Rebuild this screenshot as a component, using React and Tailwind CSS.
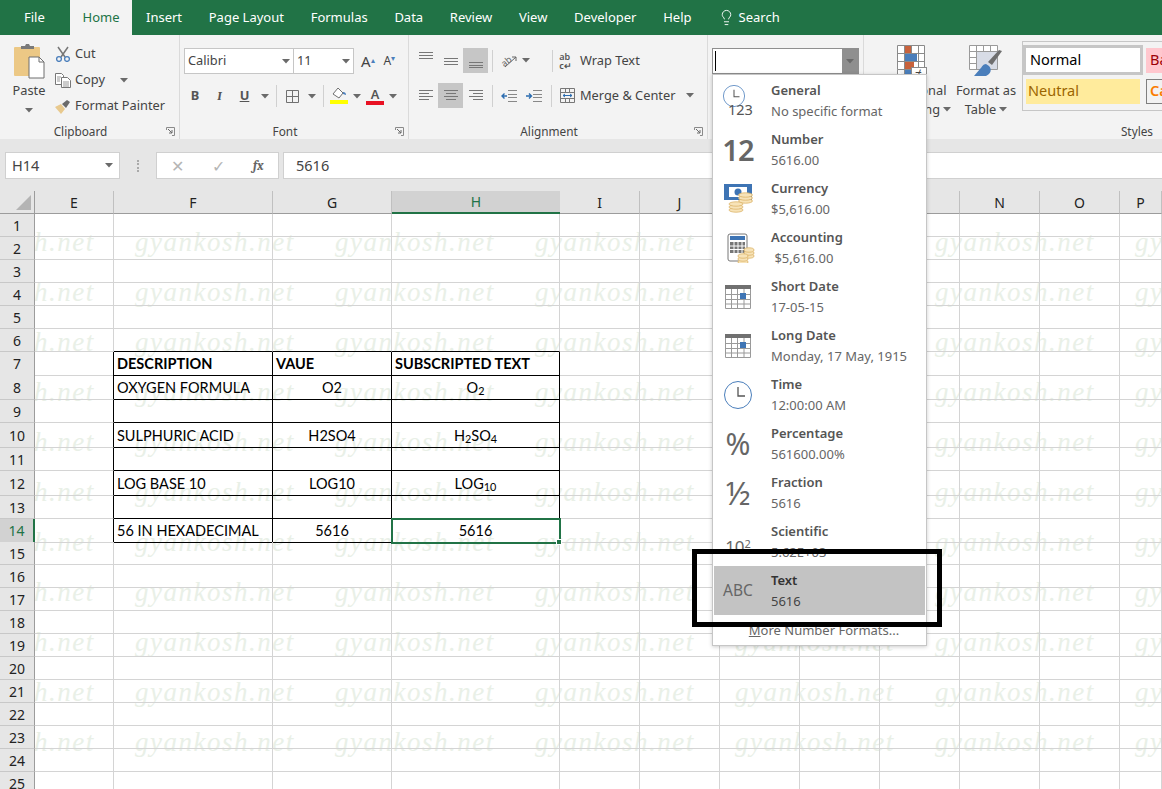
import React from "react";
import clsx from "clsx";
import { Lightbulb } from "lucide-react";

const tabs = ["Insert", "Page Layout", "Formulas", "Data", "Review", "View", "Developer", "Help"];

const columns = ["E", "F", "G", "H", "I", "J", "K", "L", "M", "N", "O", "P"];
const gridCols = "grid grid-cols-[35px_79px_159px_119px_168px_80px_80px_80px_80px_80px_80px_80px_42px]";

const Caret = ({ className }) => (
  <svg width="8" height="5" viewBox="0 0 8 5" className={clsx("shrink-0", className)}>
    <path d="M0 0h8L4 4.5z" fill="#6a6a6a" />
  </svg>
);

const Launcher = () => (
  <svg width="9" height="9" viewBox="0 0 9 9">
    <path d="M.5 3V.5h8v8H6" fill="none" stroke="#8a8a8a" />
    <path d="M2 2l4 4M3 6h3V3" fill="none" stroke="#6a6a6a" />
  </svg>
);

const Sep = ({ className }) => <div className={clsx("h-[22px] w-px bg-[#d0d0d0]", className)} />;

const Group = ({ label, launcher, className, labelClass, children }) => (
  <div className={clsx("flex h-full shrink-0 flex-col", className)}>
    <div className="flex-1">{children}</div>
    <div className={clsx("relative flex h-[18px] items-center pt-[3px] text-[11.800px] text-[#444]", labelClass ?? "justify-center pr-[18px]")}>
      {label}
      {launcher && (
        <div className="absolute right-[4px] top-[6px]">
          <Launcher />
        </div>
      )}
    </div>
  </div>
);

// lines for the alignment buttons, y values keep the vertical align variants apart
const AlignIcon = ({ rows, className }) => (
  <svg width="16" height="14" viewBox="0 0 16 14" className={className}>
    {rows.map(([x1, x2, y], i) => (
      <path key={i} d={`M${x1} ${y + 0.5}H${x2}`} stroke="#777" />
    ))}
  </svg>
);

const PasteIcon = () => (
  <svg width="32" height="36" viewBox="0 0 32 36">
    <rect x="1" y="4" width="26" height="29" rx="1" fill="#ecc885" />
    <path d="M8 5V3h4l1-2h3l1 2h4v3H8z" fill="#7a7a7a" />
    <path d="M16 14h10l5 5v16H16z" fill="#fff" stroke="#6e6e6e" />
    <path d="M26 14v5h5" fill="none" stroke="#6e6e6e" />
  </svg>
);

const CutIcon = () => (
  <svg width="16" height="16" viewBox="0 0 16 16">
    <path d="M3 1l7 10M13 1L6 11" stroke="#777" strokeWidth="1.5" fill="none" />
    <circle cx="4" cy="13" r="2.4" fill="none" stroke="#4a7ebb" strokeWidth="1.3" />
    <circle cx="12" cy="13" r="2.4" fill="none" stroke="#4a7ebb" strokeWidth="1.3" />
  </svg>
);

const CopyIcon = () => (
  <svg width="16" height="15" viewBox="0 0 16 15">
    <path d="M.5.5h6l2 2v9h-8z" fill="#fff" stroke="#777" />
    <path d="M6.5 4.5h6l3 3v7h-9z" fill="#fff" stroke="#777" />
    <path d="M2 4h4M2 6h3M2 8h3M8 9h6M8 11h6M8 13h6" stroke="#999" />
  </svg>
);

const PainterIcon = () => (
  <svg width="16" height="15" viewBox="0 0 16 15">
    <path d="M0 8l6-3 4 5-4 5z" fill="#e8c98e" />
    <path d="M7 5l5-4 3 2-4 6z" fill="#6a6a6a" />
  </svg>
);

const BordersIcon = () => (
  <svg width="13" height="13" viewBox="0 0 13 13">
    <path d="M.5.5h12v12H.5zM6.5.5v12M.5 6.5h12" fill="none" stroke="#707070" />
  </svg>
);

const FillIcon = () => (
  <svg width="18" height="18" viewBox="0 0 18 18">
    <path d="M8 1l5 5-4 5-6-4z" fill="#fff" stroke="#707070" />
    <path d="M13 5c2 0 3 1 3 3l-3-1z" fill="#4a7ebb" />
    <rect x="0" y="13" width="18" height="4" fill="#ffff00" />
  </svg>
);

const OrientIcon = () => (
  <svg width="16" height="15" viewBox="0 0 16 15">
    <text x="0" y="11" fontSize="9" fill="#666" transform="rotate(-40 6 8)">ab</text>
    <path d="M4 14L15 4M15 4h-4M15 4v4" stroke="#666" fill="none" />
  </svg>
);

const IndentIcon = ({ flip }) => (
  <svg width="16" height="12" viewBox="0 0 16 12">
    <path d="M7 .5h9M7 4.5h9M7 7.5h9M7 11.5h9" stroke="#888" />
    {flip ? <path d="M0 6h5M3 3.5L5.5 6 3 8.5" stroke="#2b6cb0" strokeWidth="1.4" fill="none" /> : <path d="M6 6H1M3.5 3.5L1 6l2.5 2.5" stroke="#2b6cb0" strokeWidth="1.4" fill="none" />}
  </svg>
);

const MergeIcon = () => (
  <svg width="15" height="15" viewBox="0 0 15 15">
    <path d="M.5.5h14v14H.5zM.5 4.5h14M.5 10.5h14M5.5.5v4M9.5.5v4M5.5 10.5v4M9.5 10.5v4" fill="none" stroke="#777" />
    <path d="M3 7.5h9M3 7.5l2-1.5M3 7.5L5 9M12 7.5L10 6M12 7.5L10 9" stroke="#2b6cb0" fill="none" />
  </svg>
);

const CondIcon = () => (
  <svg width="30" height="38" viewBox="0 0 30 38">
    <path d="M.5.5h27v24H.5zM.5 8.5h27M.5 16.5h27M7.5.5v32M14.5.5v24M21.5.5v24M.5 24.5v8h7" fill="#fff" stroke="#8a8a8a" />
    <rect x="8" y="1" width="6" height="7" fill="#c8623c" />
    <rect x="8" y="9" width="12" height="7" fill="#4a7ebb" />
    <rect x="8" y="17" width="9" height="7" fill="#c8623c" />
    <rect x="8" y="25" width="6" height="7" fill="#4a7ebb" />
    <rect x="14.500" y="22.500" width="15" height="14" fill="#fff" stroke="#8a8a8a" />
    <text x="18" y="34" fontSize="12" fill="#444">≠</text>
  </svg>
);

const TableIcon = () => (
  <svg width="34" height="32" viewBox="0 0 34 32">
    <path d="M.5.5h28v24H.5zM.5 6.5h28M.5 12.5h28M.5 18.5h28M7.500.5v24M14.500.5v24M21.500.5v24" fill="#fff" stroke="#9a9a9a" />
    <path d="M8 7h20v17H8z" fill="#d8dce6" />
    <path d="M33 6l-3-1-11 12 4 3z" fill="#6e6e6e" />
    <path d="M17 19c-3 0-4 3-6 5l-6 7h12c5-2 6-7 3-10z" fill="#4a7ebb" />
  </svg>
);

const ClockIcon = ({ size = 28 }) => (
  <svg width={size} height={size} viewBox="0 0 28 28">
    <circle cx="14" cy="14" r="13.500" fill="#fff" stroke="#4a7ebb" />
    <path d="M14 6v9h7" fill="none" stroke="#555" strokeWidth="1.3" />
  </svg>
);

const CoinStack = ({ x, y, rx = 7 }) => (
  <g>
    {[6, 3, 0].map((d) => (
      <ellipse key={d} cx={x} cy={y + d} rx={rx} ry="2.200" fill="#f7e3b8" stroke="#dcb468" strokeWidth="0.8" />
    ))}
  </g>
);

const CurrencyIcon = () => (
  <svg width="29" height="29" viewBox="0 0 29 29">
    <path d="M0 0h28v16H0z" fill="#3e74b4" />
    <path d="M5 3h18v10H5z" fill="#fff" />
    <circle cx="14" cy="8" r="3.500" fill="#3e74b4" />
    <CoinStack x={21.500} y={11} />
    <CoinStack x={12} y={20} />
  </svg>
);

const AccountingIcon = () => (
  <svg width="28" height="30" viewBox="0 0 28 30" className="ml-[6px]">
    <rect x="1" y="1" width="19" height="27" rx="2" fill="#fff" stroke="#777" />
    <rect x="3" y="3" width="15" height="4" fill="#3e74b4" />
    <path d="M3 9h15v11H3z" fill="#777" />
    <path d="M7 9v11M11 9v11M15 9v11M3 13h15M3 16.500h15" stroke="#fff" />
    <CoinStack x={22} y={17} rx={5} />
    <CoinStack x={16} y={23} rx={5} />
  </svg>
);

const CalendarIcon = () => (
  <svg width="26" height="24" viewBox="0 0 26 24">
    <rect x="0" y="0" width="26" height="4" fill="#707070" />
    <path d="M.5 4v19.500h25V4M.5 9.500h25M.5 14.500h25M.5 19h25M6.500 4v19M12.500 4v19M19 4v19" fill="none" stroke="#9a9a9a" />
    <rect x="15" y="8" width="6" height="6" fill="#3e74b4" />
  </svg>
);

const sampleIcon = "flex h-[34px] w-[40px] items-center justify-center text-[#666]";

const formats = [
  {
    name: "General",
    value: "No specific format",
    icon: (
      <div className="flex w-[30px] flex-col items-start">
        <ClockIcon size={22} />
        <span className="-mt-[6px] ml-[5px] text-[14.500px] leading-[16px] text-[#555]">123</span>
      </div>
    ),
  },
  { name: "Number", value: "5616.00", icon: <span className="text-[29px] font-semibold leading-none tracking-tight text-[#666]">12</span> },
  { name: "Currency", value: "$5,616.00", icon: <CurrencyIcon /> },
  { name: "Accounting", value: "\u00a0$5,616.00", icon: <AccountingIcon /> },
  { name: "Short Date", value: "17-05-15", icon: <CalendarIcon /> },
  { name: "Long Date", value: "Monday, 17 May, 1915", icon: <CalendarIcon /> },
  { name: "Time", value: "12:00:00 AM", icon: <ClockIcon /> },
  { name: "Percentage", value: "561600.00%", icon: <span className="text-[30px] leading-none text-[#666]">%</span> },
  { name: "Fraction", value: "5616", icon: <span className="text-[32px] leading-none text-[#666]">½</span> },
  {
    name: "Scientific",
    value: "5.62E+03",
    icon: (
      <span className="mt-[10px] text-[17px] leading-none text-[#666]">
        10<sup className="text-[11px]">2</sup>
      </span>
    ),
  },
  { name: "Text", value: "5616", active: true, icon: <span className="text-[15.500px] text-[#666]">ABC</span> },
];

const rowsData = {
  7: { F: "DESCRIPTION", G: "VAUE", H: "SUBSCRIPTED TEXT", bold: true },
  8: { F: "OXYGEN FORMULA", G: "O2", H: <span>O<sub>2</sub></span> },
  10: { F: "SULPHURIC ACID", G: "H2SO4", H: <span>H<sub>2</sub>SO<sub>4</sub></span> },
  12: { F: "LOG BASE 10", G: "LOG10", H: <span>LOG<sub>10</sub></span> },
  14: { F: "56 IN HEXADECIMAL", G: "5616", H: "5616" },
};

const rowNumbers = Array.from({ length: 25 }, (_, i) => i + 1);
const tallRows = [8, 10, 12];
const tableCols = ["F", "G", "H"];

const SheetCell = ({ col, row }) => {
  const data = rowsData[row];
  const inTable = row >= 7 && row <= 14;
  const blackRight = inTable && (col === "E" || tableCols.includes(col));
  const blackBottom = row >= 6 && row <= 14 && tableCols.includes(col);
  const selected = row === 14 && col === "H";
  const centered = data && !data.bold && (col === "G" || col === "H");

  return (
    <div
      className={clsx(
        "flex items-center whitespace-nowrap border-r border-b px-[3px] pt-px text-[14.500px] text-black",
        blackRight ? "border-r-black" : "border-r-[#d4d4d4]",
        blackBottom ? "border-b-black" : "border-b-[#d4d4d4]",
        centered && "justify-center",
        data?.bold && "font-bold",
        selected && "relative z-10 outline-2 -outline-offset-1 outline-[#217346]"
      )}
    >
      {data && data[col]}
      {selected && <div className="absolute -bottom-[3px] -right-[3px] size-[6px] border border-white bg-[#217346]" />}
    </div>
  );
};

const App = () => {
  return (
    <div className="relative flex h-[789px] w-[1162px] flex-col overflow-hidden bg-white font-['Noto_Sans',sans-serif]">
      {/* tabs */}
      <div className="flex h-[35px] shrink-0 items-center bg-[#217346] text-[13px] text-white">
        <span className="ml-[24px] w-[46px]">File</span>
        <div className="flex h-full w-[62px] items-center justify-center bg-[#f3f3f3] text-[#217346]">Home</div>
        <div className="ml-[14px] flex gap-[26.700px]">
          {tabs.map((t) => (
            <span key={t}>{t}</span>
          ))}
        </div>
        <div className="ml-[26px] flex items-center gap-[4px]">
          <Lightbulb size={17} strokeWidth={1.3} />
          <span>Search</span>
        </div>
      </div>

      {/* ribbon */}
      <div className="flex h-[104px] shrink-0 bg-[#f3f3f3] text-[12.800px] text-[#444]">
        <Group label="Clipboard" launcher className="w-[180px] border-r border-[#dadada]">
          <div className="flex">
            <div className="ml-[9px] mt-[8px] flex w-[40px] flex-col items-center">
              <PasteIcon />
              <span className="mt-[2px]">Paste</span>
              <Caret className="mt-[8px]" />
            </div>
            <div className="ml-[6px] mt-[10px] flex flex-col gap-[8px]">
              <div className="flex h-[18px] items-center gap-[4px]"><CutIcon />Cut</div>
              <div className="flex h-[18px] items-center gap-[4px]"><CopyIcon />Copy<Caret className="ml-[11px]" /></div>
              <div className="flex h-[18px] items-center gap-[4px]"><PainterIcon />Format Painter</div>
            </div>
          </div>
        </Group>

        <Group label="Font" launcher className="w-[229px] border-r border-[#dadada]">
          <div className="ml-[4px] mt-[13px] flex h-[26px] items-center">
            <div className="flex h-full w-[110px] items-center justify-between border border-[#c6c6c6] bg-white px-[3px] pr-[3px]">Calibri<Caret /></div>
            <div className="flex h-full w-[60px] items-center justify-between border border-l-0 border-[#c6c6c6] bg-white pl-[3px] pr-[3px]">11<Caret /></div>
            <span className="ml-[7px] text-[15px]">A<sup className="text-[8px] text-[#4a7ebb]">▴</sup></span>
            <span className="ml-[9px] text-[12px]">A<sup className="text-[8px] text-[#4a7ebb]">▾</sup></span>
          </div>
          <div className="ml-[3px] mt-[10px] flex h-[24px] items-center text-[#555]">
            <span className="w-[24px] text-center font-bold">B</span>
            <span className="w-[25px] text-center font-serif font-bold italic">I</span>
            <span className="w-[25px] text-center font-bold underline">U</span>
            <div className="flex w-[15px] justify-center"><Caret /></div>
            <div className="flex w-[8px] justify-center"><Sep /></div>
            <div className="flex w-[24px] justify-center"><BordersIcon /></div>
            <div className="flex w-[16px] justify-center"><Caret /></div>
            <div className="flex w-[6px] justify-center"><Sep /></div>
            <div className="flex w-[26px] justify-center"><FillIcon /></div>
            <div className="flex w-[10px] justify-center"><Caret /></div>
            <div className="flex w-[26px] flex-col items-center font-semibold leading-[14px]">A<div className="h-[4px] w-[18px] bg-[#e81123]" /></div>
            <div className="flex w-[10px] justify-center"><Caret /></div>
          </div>
        </Group>

        <Group label="Alignment" launcher className="w-[299px] border-r border-[#dadada]">
          <div className="ml-[4px] mt-[13px] flex h-[25px] items-center">
            <div className="flex h-full w-[25px] items-center justify-center"><AlignIcon rows={[[1, 15, 0], [1, 15, 3], [1, 15, 6]]} className="-mt-[4px]" /></div>
            <div className="flex h-full w-[25px] items-center justify-center"><AlignIcon rows={[[1, 15, 4], [1, 15, 7], [1, 15, 10]]} /></div>
            <div className="flex h-full w-[25px] items-center justify-center bg-[#c6c6c6]"><AlignIcon rows={[[1, 15, 8], [1, 15, 11], [1, 15, 13]]} /></div>
            <div className="flex w-[8px] justify-center"><Sep /></div>
            <div className="flex w-[26px] justify-center"><OrientIcon /></div>
            <Caret />
            <div className="flex w-[25px] justify-end pr-[2px]"><Sep /></div>
            <div className="flex w-[21px] justify-center text-[9px] font-semibold leading-[9px] text-[#555]"><span>ab<br />c↵</span></div>
            <span className="ml-[4px]">Wrap Text</span>
          </div>
          <div className="ml-[4px] mt-[10px] flex h-[25px] items-center">
            <div className="flex h-full w-[25px] items-center justify-center"><AlignIcon rows={[[1, 15, 1], [1, 11, 4], [1, 15, 7], [1, 11, 10]]} /></div>
            <div className="flex h-full w-[25px] items-center justify-center bg-[#c6c6c6]"><AlignIcon rows={[[1, 15, 1], [3, 13, 4], [1, 15, 7], [3, 13, 10]]} /></div>
            <div className="flex h-full w-[25px] items-center justify-center"><AlignIcon rows={[[1, 15, 1], [5, 15, 4], [1, 15, 7], [5, 15, 10]]} /></div>
            <div className="flex w-[8px] justify-center"><Sep /></div>
            <div className="flex w-[26px] justify-center"><IndentIcon /></div>
            <div className="flex w-[24px] justify-center"><IndentIcon flip /></div>
            <div className="flex w-[11px] justify-center"><Sep /></div>
            <div className="flex w-[21px] justify-center"><MergeIcon /></div>
            <span className="ml-[2px]">Merge &amp; Center</span>
            <Caret className="ml-[11px]" />
          </div>
        </Group>

        <Group label="" className="w-[156px] border-r border-[#dadada]">
          <div className="ml-[4px] mt-[13px] flex h-[26px] w-[147px] items-center justify-between border border-[#8f8f8f] bg-white">
            <div className="ml-[2px] h-[20px] w-px bg-black" />
            <div className="flex h-full w-[16px] items-center justify-center bg-[#8f8f8f]"><Caret /></div>
          </div>
        </Group>

        <Group label="Styles" labelClass="justify-end pr-[9px]" className="w-[298px]">
          <div className="flex">
            <div className="ml-[4px] mt-[10px] flex w-[86px] shrink-0 flex-col items-center pl-[2px] text-center leading-[19px]">
              <CondIcon />
              <span className="mt-[-2px]">Conditional</span>
              <span className="flex items-center gap-[3px]">Formatting<Caret /></span>
            </div>
            <div className="mt-[10px] flex w-[64px] shrink-0 flex-col items-center text-center leading-[19px]">
              <div className="h-[36px]"><TableIcon /></div>
              <span className="whitespace-nowrap">Format as</span>
              <span className="flex items-center gap-[3px]">Table<Caret /></span>
            </div>
            <div className="ml-[4px] mt-[6px] flex h-[70px] min-w-0 flex-1 gap-[3px] border border-r-0 border-[#c6c6c6] bg-[#f3f3f3] pt-[3px] text-[14.500px]">
              <div className="flex w-[120px] shrink-0 flex-col gap-[4px]">
                <div className="flex h-[30px] items-center border-[3px] border-[#c6c6c6] bg-white pl-[4px] text-black">Normal</div>
                <div className="mx-[3px] flex h-[25px] items-center bg-[#ffeb9c] pb-[2px] pl-[2px] text-[#9c6500]">Neutral</div>
              </div>
              <div className="flex min-w-0 flex-1 flex-col gap-[6px] overflow-hidden pt-[3px]">
                <div className="flex h-[25px] items-center bg-[#ffc7ce] pb-[2px] pl-[4px] text-[#9c0006]">Bad</div>
                <div className="flex h-[25px] items-center border border-r-0 border-[#7f7f7f] bg-[#f2f2f2] pb-[2px] pl-[3px] font-semibold text-[#fa7d00]">Ca</div>
              </div>
            </div>
          </div>
        </Group>
      </div>

      {/* formula bar */}
      <div className="flex h-[52px] shrink-0 items-start bg-[#e6e6e6] pt-[13px] text-[14.500px] text-[#444]">
        <div className="ml-[5px] flex h-[27px] w-[115px] items-center justify-between border border-[#d0d0d0] bg-white px-[6px]">H14<Caret /></div>
        <div className="flex h-[27px] w-[36px] items-center justify-center">
          <div className="h-[12px] border-l-2 border-dotted border-[#aaa]" />
        </div>
        <div className="flex h-[27px] w-[123px] items-center border border-[#d0d0d0] bg-white text-[#b5b5b5]">
          <span className="ml-[14px] w-[41px] text-[16px]">✕</span>
          <span className="w-[41px] text-[16px]">✓</span>
          <span className="font-serif text-[13px] font-bold italic text-[#666]">fx</span>
        </div>
        <div className="ml-[4px] flex h-[27px] flex-1 items-center border border-r-0 border-[#d0d0d0] bg-white pl-[12px]">5616</div>
      </div>

      {/* column headers */}
      <div className={clsx(gridCols, "h-[23px] shrink-0 bg-[#e6e6e6] text-[14px] text-[#222]")}>
        <div className="flex items-center justify-end border-r border-b border-[#9c9c9c] pr-[3px]">
          <svg width="15" height="15" viewBox="0 0 15 15"><path d="M15 0v15H0z" fill="#b4b4b4" /></svg>
        </div>
        {columns.map((c) =>
          c === "H" ? (
            <div key={c} className="flex items-center justify-center border-b-2 border-[#217346] bg-[#d2d2d2] text-[#217346]">{c}</div>
          ) : (
            <div key={c} className="flex items-center justify-center border-r border-b border-r-[#c0c0c0] border-b-[#9c9c9c]">{c}</div>
          )
        )}
      </div>

      {/* sheet */}
      <div className="relative flex-1 overflow-hidden font-['Lato',sans-serif]">
        <div className="absolute -left-[65px] top-[3px] flex w-[1400px] flex-wrap font-['Liberation_Serif',serif] text-[27px] italic tracking-[1.500px] text-[#e9f0e7]">
          {Array.from({ length: 77 }, (_, i) => (
            <span key={i} className="flex h-[50px] w-[200px] items-center">gyankosh.net</span>
          ))}
        </div>
        <div className="relative">
          {rowNumbers.map((r) => (
            <div key={r} className={clsx(gridCols, tallRows.includes(r) ? "h-[25px]" : "h-[23px]")}>
              <div
                className={clsx(
                  "flex items-center justify-center border-b border-b-[#c8c8c8] font-['Noto_Sans',sans-serif] text-[14px]",
                  r === 14 ? "border-r-2 border-r-[#217346] bg-[#d2d2d2] text-[#217346]" : "border-r border-r-[#9c9c9c] bg-[#e6e6e6] text-[#222]"
                )}
              >
                {r}
              </div>
              {columns.map((c) => (
                <SheetCell key={c} col={c} row={r} />
              ))}
            </div>
          ))}
        </div>
      </div>

      {/* number format dropdown */}
      <div className="absolute left-[712px] top-[74px] flex h-[572px] w-[215px] flex-col border border-[#c6c6c6] bg-white px-px pt-px text-[13px] text-[#666] shadow-[0_1px_4px_rgba(0,0,0,0.2)]">
        {formats.map((f) => (
          <div key={f.name} className={clsx("flex h-[49px] shrink-0", f.active && "bg-[#c3c3c3]")}>
            <div className="flex w-[48px] shrink-0 items-center justify-center">
              <div className={sampleIcon}>{f.icon}</div>
            </div>
            <div className="ml-[9px] flex flex-col pt-[4px] leading-[21px]">
              <span className={clsx("font-semibold", f.active ? "text-[#333]" : "text-[#555]")}>{f.name}</span>
              <span className={clsx(f.active && "text-[#444]")}>{f.value}</span>
            </div>
          </div>
        ))}
        <div className="flex flex-1 items-center justify-center pl-[9px] pt-[1px]">
          <span><span className="underline">M</span>ore Number Formats...</span>
        </div>
      </div>

      {/* highlight drawn over the screenshot */}
      <div className="absolute left-[692px] top-[549px] h-[78px] w-[250px] border-[5px] border-black" />
    </div>
  );
};

export default App;
